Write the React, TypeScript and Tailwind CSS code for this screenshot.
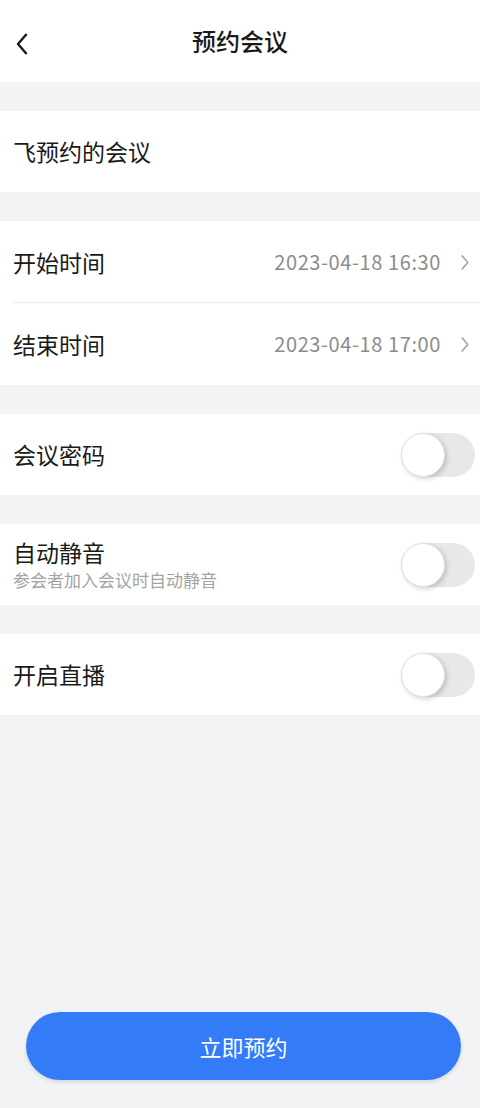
import React from 'react';

const font = { fontFamily: '"Noto Sans CJK SC", "Noto Sans", sans-serif' };

const Chevron: React.FC<{ className?: string; strokeWidth?: number }> = ({ className, strokeWidth = 1.6 }) => (
  <svg viewBox="0 0 10 18" className={className} fill="none" stroke="currentColor" strokeWidth={strokeWidth} strokeLinecap="round" strokeLinejoin="round">
    <path d="M2 2l6 7-6 7" />
  </svg>
);

const Toggle: React.FC = () => (
  <div className="relative w-[74px] h-[44px] rounded-full bg-[#e8e8ea]">
    <div className="absolute left-0 top-0 w-[44px] h-[44px] rounded-full bg-white border border-[#e2e2e2] shadow-[2px_2px_5px_rgba(0,0,0,0.18)]" />
  </div>
);

const Gap = () => <div className="h-[29px]" />;

const DateRow: React.FC<{ label: string; value: string; divider?: boolean }> = ({ label, value, divider }) => (
  <div className="flex items-center justify-between h-[82px] pl-[13px] pr-[10px] relative">
    <span className="text-[23px] text-[#1a1a1a]">{label}</span>
    <div className="flex items-center gap-[19px]">
      <span className="text-[20px] tracking-[0.6px] text-[#8c8c8c]">{value}</span>
      <Chevron className="w-[10px] h-[17px] text-[#a0a0a0]" />
    </div>
    {divider && <div className="absolute left-[13px] right-0 bottom-0 h-px bg-[#ececee]" />}
  </div>
);

const SwitchRow: React.FC<{ label: string; sub?: string }> = ({ label, sub }) => (
  <div className="flex items-center justify-between h-[81px] pl-[13px] pr-[5px] bg-white">
    <div className="flex flex-col">
      <span className={`text-[23px] text-[#1a1a1a] ${sub ? 'leading-[31px]' : 'leading-[29px]'}`}>{label}</span>
      {sub && <span className="text-[17px] leading-[24px] text-[#a3a3a3]">{sub}</span>}
    </div>
    <Toggle />
  </div>
);

export default function App() {
  return (
    <div className="w-[480px] h-[1108px] bg-[#f2f3f5] flex flex-col" style={font}>
      <div className="h-[82px] bg-white relative flex items-center justify-center">
        <div className="absolute left-[13px] top-[32px] w-[18px] h-[24px] rotate-180">
          <Chevron className="w-[18px] h-[24px] text-[#1a1a1a]" strokeWidth={1.8} />
        </div>
        <span className="text-[24px] text-[#1a1a1a] font-medium">预约会议</span>
      </div>
      <Gap />
      <div className="h-[81px] bg-white flex items-center pl-[13px]">
        <span className="text-[23px] text-[#1a1a1a]">飞预约的会议</span>
      </div>
      <Gap />
      <div className="bg-white">
        <DateRow label="开始时间" value="2023-04-18 16:30" divider />
        <DateRow label="结束时间" value="2023-04-18 17:00" />
      </div>
      <Gap />
      <SwitchRow label="会议密码" />
      <Gap />
      <SwitchRow label="自动静音" sub="参会者加入会议时自动静音" />
      <Gap />
      <SwitchRow label="开启直播" />
      <div className="flex-1" />
      <div className="pl-[26px] pr-[19px] pb-[28px]">
        <button className="w-full h-[68px] rounded-full bg-[#347cf7] text-white text-[22px] shadow-[0_2px_4px_rgba(0,0,0,0.12)]">
          立即预约
        </button>
      </div>
    </div>
  );
}
